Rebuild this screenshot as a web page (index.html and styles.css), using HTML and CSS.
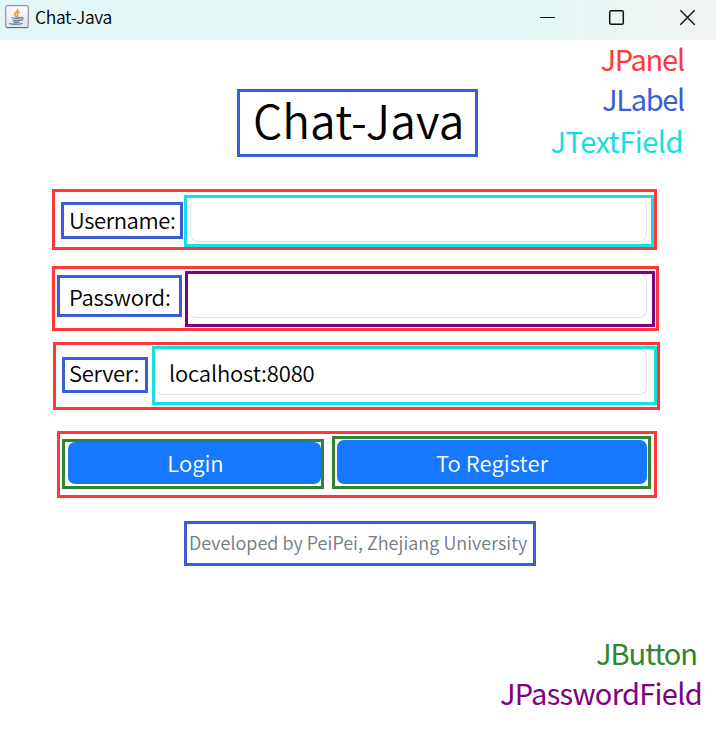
FILE: index.html
```html
<!DOCTYPE html>
<html lang="en">
<head>
<meta charset="utf-8">
<title>Chat-Java</title>
<link rel="stylesheet" href="styles.css">
</head>
<body>
<header class="titlebar">
  <svg class="app-icon" width="24" height="24" viewBox="0 0 24 24">
    <defs><linearGradient id="g" x1="0" y1="0" x2="0" y2="1"><stop offset="0" stop-color="#fff"/><stop offset="1" stop-color="#dfe2e8"/></linearGradient></defs>
    <rect x=".7" y=".7" width="22.6" height="22" rx="2" fill="url(#g)" stroke="#8495a8" stroke-width="1.2"/>
    <path d="M1.500 22.500h21" stroke="#60758c" stroke-width="1"/>
    <path d="M12.800 4.200c1 2.200-3.600 3.200-3.300 5.200.2 1.100 1.300 1.500 1.700 2.500M14.800 7c-2.300.8-3.100 1.700-2.200 3 .4.700.1 1.400-.5 2" fill="none" stroke="#f58a22" stroke-width="1.500"/>
    <path d="M6.500 12.500c2 .7 7 .7 9.500 0M7.500 14.800c2 .7 6 .7 8 0M8.300 16.800c2 .6 4.500.6 6.300 0M15.800 12.500c3-.8 2.800 2.200-.3 3M5 18.300c-1.500 1.100 9.500 1.400 12.500 0" fill="none" stroke="#64849f" stroke-width="1.300"/>
  </svg>
  <span class="title">Chat-Java</span>
  <svg class="controls" width="156" height="20" viewBox="0 0 156 20" fill="none" stroke="#111" stroke-width="1.400">
    <path d="M0 9.500h15" stroke-width="1"/>
    <rect x="69.700" y="2.700" width="13.600" height="13.600" rx="1.500" stroke-width="1.500"/>
    <path d="M140.300 2.300l14.400 14.400M154.700 2.300l-14.400 14.400"/>
  </svg>
</header>
<main>
  <section class="top">
    <h1 class="mark label heading"><span>Chat-Java</span></h1>
    <div class="legend legend-top">
      <span class="t-panel">JPanel</span>
      <span class="t-label">JLabel</span>
      <span class="t-text">JTextField</span>
    </div>
  </section>
  <section class="mark panel row-user">
    <label class="mark label"><span class="caption">Username:</span></label>
    <div class="mark text"><div class="field"></div></div>
  </section>
  <section class="mark panel row-pass">
    <label class="mark label"><span class="caption">Password:</span></label>
    <div class="mark password"><div class="field"></div></div>
  </section>
  <section class="mark panel row-server">
    <label class="mark label"><span class="caption">Server:</span></label>
    <div class="mark text"><div class="field"><span class="value">localhost:8080</span></div></div>
  </section>
  <section class="mark panel row-buttons">
    <div class="mark action login"><div class="btn"><span>Login</span></div></div>
    <div class="mark action register"><div class="btn"><span>To Register</span></div></div>
  </section>
  <footer class="mark label credit"><span>Developed by PeiPei, Zhejiang University</span></footer>
  <div class="legend legend-bottom">
    <span class="t-button">JButton</span>
    <span class="t-password">JPasswordField</span>
  </div>
</main>
</body>
</html>
```
FILE: styles.css
```css
* { box-sizing: border-box; }
body {
  margin: 0;
  width: 716px;
  height: 729px;
  overflow: hidden;
  background: #fff;
  color: #000;
  font: 350 22px/30px "Noto Sans CJK SC", sans-serif;
}
.titlebar {
  display: flex;
  height: 40px;
  padding: 5px 20px 0 5px;
  background: linear-gradient(90deg, #e3f7f6 0, #e3f7f6 70%, #eff4f2 96%, #eff3f1 100%);
}
.title {
  margin-left: 6px;
  font: 350 17.5px/24px "Noto Sans CJK SC", sans-serif;
  letter-spacing: -0.35px;
}
.controls { margin: 3px 0 0 auto; }
span { white-space: nowrap; }
.mark { border: 3px solid; }
.panel { border-color: #fe3838; display: flex; align-items: flex-start; }
.label { border-color: #3a5cd4; }
.text { border-color: #18dede; }
.password { border-color: #800080; }
.action { border-color: #2f8530; }
.mark span { color: #000; display: block; }

.top { display: flex; height: 149px; justify-content: space-between; }
.heading {
  margin: 49px 0 0 237px;
  width: 241px;
  height: 68px;
  padding-left: 13px;
  font-size: 46px;
  font-weight: 350;
  line-height: 54px;
  letter-spacing: 0.1px;
}
.legend {
  display: flex;
  flex-direction: column;
  align-items: flex-end;
  font: 400 29px/40px "Noto Sans CJK SC", sans-serif;
}
.legend-top { margin-top: -2px; padding-right: 32px; }
.t-panel { color: #fe3838; letter-spacing: -1.2px; }
.t-label { color: #3a5cd4; letter-spacing: -1.3px; }
.t-text { color: #18dede; margin: 2px 1px 0 0; letter-spacing: -0.5px; }
.t-button { color: #2f8530; margin-right: 5px; letter-spacing: -1.05px; font-variant-ligatures: none; }
.t-password { color: #800080; letter-spacing: -0.7px; }

.row-user { width: 605px; height: 61px; margin-left: 52px; }
.row-user .label { width: 122px; height: 37px; margin: 10px 1px 0 6px; padding-left: 5px; }
.row-user .text { width: 470px; height: 52px; margin-top: 3px; padding: 0 4px 0 3px; }
.row-user .field { height: 44px; border-top: 0; }
.row-user .caption { line-height: 29px; letter-spacing: -0.4px; }

.row-pass { width: 607px; height: 65px; margin: 16px 0 0 52px; }
.row-pass .label { width: 125px; height: 42px; margin: 6px 3px 0 2px; padding: 3px 0 0 9px; }
.row-pass .caption { letter-spacing: -0.2px; }
.row-pass .password { width: 470px; height: 56px; margin-top: 2px; padding-right: 5px; }
.row-pass .field { height: 44px; border-top: 0; border-left: 0; }

.row-server { width: 607px; height: 68px; margin: 11px 0 0 53px; }
.row-server .label { width: 86px; height: 36px; margin: 12px 4px 0 6px; padding-left: 4px; }
.row-server .caption { line-height: 25px; letter-spacing: -0.3px; }
.row-server .text { width: 505px; height: 59px; margin-top: 1px; padding-right: 7px; }
.row-server .field { height: 46px; padding: 7px 0 0 13px; border-left-color: transparent; }

.field { border: 1px solid #dce0e5; border-radius: 8px; }
.value { line-height: 30px; letter-spacing: -0.15px; }

.row-buttons { width: 600px; height: 67px; margin: 21px 0 0 57px; }
.login { width: 262px; height: 50px; margin: 5px 8px 0 2px; padding-left: 3px; }
.register { width: 319px; height: 53px; margin-top: 2px; padding: 1px 1px 0 2px; }
.btn { border-radius: 7px; background: #1677ff; text-align: center; }
.login .btn { height: 42px; padding-left: 2px; }
.register .btn { height: 44px; }
.mark.action span { color: #fff; line-height: 41px; }
.mark.register span { line-height: 45px; letter-spacing: 0.1px; }

.credit {
  width: 352px;
  height: 45px;
  margin: 23px 0 0 184px;
  padding: 3px 5px 0 2px;
  font-size: 18px;
}
.mark.credit span { color: #727a82; letter-spacing: 0.03px; }
.legend-bottom { padding: 66px 14px 0 0; }
```
